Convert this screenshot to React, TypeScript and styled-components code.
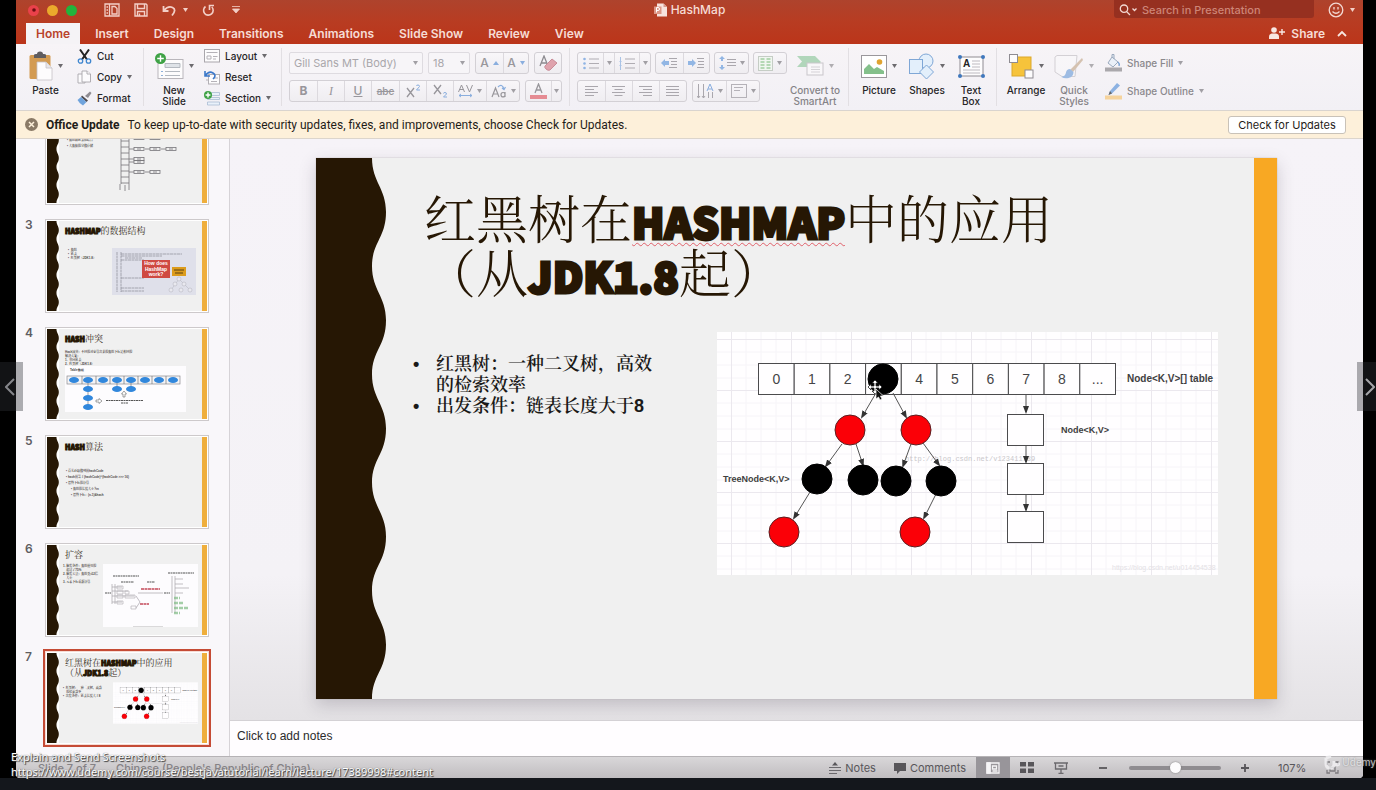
import React from 'react';
import styled, { createGlobalStyle, css } from 'styled-components';

const ui = '"Inter", "Roboto", "Liberation Sans", sans-serif';
const helv = '"Liberation Sans", "Noto Sans CJK SC", sans-serif';
const cjk = '"Liberation Sans", "Noto Serif CJK SC", "Noto Sans CJK SC", sans-serif';
const song = '"Noto Serif CJK SC", "Noto Sans CJK SC", serif';
const heavy = '"Impact", "Noto Sans CJK SC", sans-serif';

const Global = createGlobalStyle`
  *, *::before, *::after { box-sizing: border-box; }
  body { margin: 0; background: #14171c; font-family: ${ui}; }
  button, input, select { font: inherit; color: inherit; }
  button { border: 0; padding: 0; margin: 0; background: none; }
  svg { display: block; flex: none; }
`;

/* ---------- shell ---------- */

const Page = styled.div`
  position: relative;
  min-height: 100vh;
  display: flex;
  flex-direction: column;
  overflow: hidden;
  padding-bottom: 13px;
`;
const Stage = styled.div`
  flex: 1;
  display: flex;
  background: #000;
  padding: 0 13px 0 16px;
`;
const Window = styled.div`
  flex: 1;
  min-width: 0;
  display: flex;
  flex-direction: column;
  background: #f3f1f5;
  border-radius: 0 0 4px 4px;
  overflow: hidden;
`;
const Header = styled.header`
  background: linear-gradient(#ae432d, #b83c22 50%, #bb351a);
  color: #f6dcd5;
`;
const TitleBar = styled.div`
  height: 20px;
  display: grid;
  grid-template-columns: 1fr auto 1fr;
  align-items: center;
`;
const TitleLeft = styled.div`
  display: flex;
  align-items: center;
  padding-left: 12px;
`;
const Lights = styled.div`
  display: flex;
  gap: 8px;
  margin-right: 27px;
`;
const Light = styled.button<{ $c: string }>`
  width: 11px;
  height: 11px;
  border-radius: 50%;
  background: ${p => p.$c};
  display: grid;
  place-items: center;
`;
const QuickTools = styled.div`
  display: flex;
  align-items: center;
  gap: 14px;
`;
const Bare = styled.button`
  display: inline-flex;
  align-items: center;
  gap: 6px;
`;
const DocTitle = styled.h1`
  margin: 0;
  display: flex;
  align-items: center;
  gap: 4px;
  font-size: 12px;
  line-height: 20px;
  font-weight: 500;
`;
const TitleRight = styled.div`
  display: flex;
  justify-content: flex-end;
  align-items: center;
  gap: 14px;
  padding-right: 8px;
`;
const SearchBox = styled.label`
  width: 200px;
  height: 18px;
  margin-bottom: 2px;
  display: flex;
  align-items: center;
  gap: 4px;
  padding: 2px 5px 0;
  background: #963020;
  border-radius: 0 0 3px 3px;
`;
const SearchInput = styled.input`
  flex: 1;
  min-width: 0;
  border: 0;
  padding: 0;
  background: none;
  outline: none;
  font-size: 11px;
  line-height: 14px;
  font-weight: 500;
  &::placeholder { color: #cd8577; opacity: 1; }
`;
const TabRow = styled.nav`
  height: 24px;
  display: flex;
  align-items: flex-end;
  gap: 5px;
  padding: 0 16px 0 10px;
`;
const Tab = styled.button<{ $on?: boolean }>`
  height: 21px;
  padding: 0 10px;
  font-size: 12px;
  line-height: 21px;
  font-weight: 600;
  ${p => p.$on && css`background: #f5f3f6; color: #b9432b;`}
`;
const Spacer = styled.div`flex: 1;`;
const ShareGroup = styled.div`
  height: 22px;
  display: flex;
  align-items: center;
  gap: 12px;
  font-size: 12px;
  font-weight: 600;
`;

/* ---------- ribbon ---------- */

const Ribbon = styled.div`
  height: 67px;
  display: flex;
  background: linear-gradient(#f7f4f7, #f2f0f5);
  border-bottom: 1px solid #d9d4cf;
  padding: 4px 0;
  color: #262527;
`;
const Group = styled.div<{ $w?: number; $pad?: number; $gap?: number }>`
  flex: none;
  width: ${p => (p.$w ? p.$w + 'px' : 'auto')};
  padding-left: ${p => p.$pad ?? 8}px;
  gap: ${p => p.$gap ?? 0}px;
  display: flex;
  align-items: flex-start;
  border-right: 1px solid #e2dfe3;
  &:last-child { border-right: 0; }
`;
const Big = styled.button<{ $w: number; $dim?: boolean }>`
  width: ${p => p.$w}px;
  display: flex;
  flex-direction: column;
  align-items: center;
  gap: 4px;
  font-size: 10px;
  line-height: 11px;
  font-weight: 500;
  color: ${p => (p.$dim ? '#858387' : '#262527')};
  padding-top: 3px;
`;
const BigIcon = styled.span<{ $dim?: boolean }>`
  height: 30px;
  display: flex;
  align-items: center;
  gap: 5px;
  opacity: ${p => (p.$dim ? 0.5 : 1)};
`;
const SmallStack = styled.div<{ $gap?: number; $top?: number; $left?: number }>`
  display: flex;
  flex-direction: column;
  gap: ${p => p.$gap ?? 5}px;
  padding: ${p => p.$top ?? 0}px 0 0 ${p => p.$left ?? 0}px;
`;
const Small = styled.button<{ $dim?: boolean }>`
  height: 16px;
  display: flex;
  align-items: center;
  gap: 5px;
  font-size: 10px;
  line-height: 16px;
  font-weight: 500;
  white-space: nowrap;
  color: ${p => (p.$dim ? '#8a888c' : '#262527')};
`;
const Rows = styled.div`
  display: flex;
  flex-direction: column;
  gap: 6px;
  padding-top: 4px;
`;
const Line = styled.div<{ $gap?: number }>`
  display: flex;
  gap: ${p => p.$gap ?? 5}px;
`;
const Seg = styled.div`
  height: 22px;
  display: flex;
  border: 1px solid #d3d0d5;
  border-radius: 3px;
  background: linear-gradient(#f8f6f9, #efedf1);
`;
const Cell = styled.button<{ $w: number; $small?: boolean; $serif?: boolean }>`
  width: ${p => p.$w}px;
  display: flex;
  align-items: center;
  justify-content: center;
  gap: 4px;
  font-family: ${p => (p.$serif ? '"Liberation Serif", serif' : ui)};
  font-size: ${p => (p.$small ? 10 : 12)}px;
  line-height: 20px;
  font-weight: 500;
  color: #98969b;
  & + & { border-left: 1px solid #dcd9de; }
`;
const SelectWrap = styled.label<{ $w: number }>`
  width: ${p => p.$w}px;
  height: 22px;
  display: flex;
  align-items: center;
  padding: 0 4px;
  border: 1px solid #dedbe0;
  border-radius: 2px;
  background: #f7f5f8;
  color: #a9a7ab;
`;
const Select = styled.select`
  flex: 1;
  min-width: 0;
  appearance: none;
  border: 0;
  padding: 0;
  background: none;
  outline: none;
  font-size: 11px;
  line-height: 18px;
`;

/* ---------- update bar ---------- */

const UpdateBar = styled.div`
  height: 28px;
  display: flex;
  align-items: center;
  gap: 8px;
  padding: 0 17px 0 9px;
  background: #fdf0da;
  border-bottom: 1px solid #dcd5cc;
  font-family: "Roboto", sans-serif;
  font-size: 12px;
  color: #1f1c18;
`;
const UpdateText = styled.span`flex: 1;`;
const CheckButton = styled.button`
  width: 118px;
  height: 18px;
  border: 1px solid #c9c2b8;
  border-radius: 3px;
  background: #fff;
  font-family: ${ui};
  font-size: 11px;
  line-height: 16px;
  white-space: nowrap;
`;

/* ---------- workspace ---------- */

const Work = styled.main`
  flex: 1;
  min-height: 0;
  display: flex;
`;
const Sidebar = styled.aside`
  flex: none;
  width: 214px;
  height: 617px;
  min-height: 100%;
  overflow: hidden;
  display: flex;
  flex-direction: column;
  justify-content: flex-end;
  gap: 14px;
  padding: 0 0 11px 9px;
  background: #f9f7fa;
  border-right: 1px solid #d6d3d7;
`;
const ThumbRow = styled.div`
  flex: none;
  display: flex;
  align-items: flex-start;
`;
const ThumbNo = styled.span`
  width: 20px;
  font-size: 12px;
  line-height: 12px;
  font-weight: 600;
  color: #5f5d61;
`;
const Thumb = styled.button<{ $on?: boolean }>`
  width: 164px;
  height: 94px;
  display: flex;
  text-align: left;
  border: 1px solid #cdc9cb;
  padding: 1px;
  background: #fff;
  ${p => p.$on && css`border-color: #f6dcd5; outline: 2px solid #c54b35;`}
`;
const ThumbPaper = styled.span`
  flex: 1;
  min-width: 0;
  height: 100%;
  display: block;
  background: #f0f0f0;
  overflow: hidden;
`;
const ThumbTitle = styled.span`
  display: block;
  margin: 5px 0 0 6px;
  font-family: ${song};
  font-size: 9px;
  line-height: 10px;
  font-weight: 400;
  color: #3a3026;
  white-space: pre;
  b { font-family: ${heavy}; font-size: 7px; line-height: 7px; font-weight: 900; color: #261704; -webkit-text-stroke: 1px #261704; }
`;
const ThumbBody = styled.span<{ $top: number; $col: number; $left?: number; $stack?: boolean }>`
  display: grid;
  grid-template-columns: ${p => (p.$stack ? '1fr' : `${p.$col}px 1fr`)};
  margin: ${p => p.$top}px 0 0 ${p => p.$left ?? 6}px;
`;
const ThumbText = styled.span<{ $lh?: number; $top?: number }>`
  display: block;
  padding-top: ${p => p.$top ?? 0}px;
  font-family: ${cjk};
  font-size: 3px;
  line-height: ${p => p.$lh ?? 4}px;
  white-space: pre;
  font-weight: 700;
  color: #4e4a47;
`;
const ThumbStripe = styled.span`
  width: 5px;
  height: 100%;
  background: #efae3c;
`;
const Editor = styled.section`
  flex: 1;
  min-width: 0;
  display: flex;
  flex-direction: column;
`;
const Canvas = styled.div`
  flex: 1;
  display: flex;
  padding: 19px 86px 21px;
  background: linear-gradient(#f6f3f8, #f4f2f6 75%, #e4e2e5);
`;
const Slide = styled.article`
  flex: 1;
  min-width: 0;
  display: flex;
  background: #f0f0f0;
  box-shadow: 0 0 1px #aaa6a8, 0 6px 16px rgba(60, 50, 70, 0.22);
`;
const SlideContent = styled.div`
  flex: 1;
  min-width: 0;
  padding: 32px 36px 0 24px;
`;
const SlideTitle = styled.h2`
  margin: 0 0 0 13px;
  height: 112px;
  font-family: ${song};
  font-size: 52px;
  line-height: 54px;
  font-weight: 300;
  color: #261704;
  white-space: nowrap;
`;
const Heavy = styled.b`
  font-family: ${heavy};
  font-size: 42px;
  font-weight: 900;
  line-height: 36px;
  -webkit-text-stroke: 3px #261704;
`;
const Misspelt = styled(Heavy)`
  text-decoration: underline wavy #e0606a 1px;
  text-underline-offset: 3px;
  text-decoration-skip-ink: none;
`;
const SlideBody = styled.div`
  display: flex;
  justify-content: space-between;
  margin-top: 30px;
`;
const Bullets = styled.ul`
  margin: 22px 0 0;
  padding: 0 0 0 25px;
  width: 245px;
  font-family: ${cjk};
  font-size: 18px;
  line-height: 21px;
  font-weight: 600;
  color: #1a1918;
  list-style: none;
  li { position: relative; }
  li::before { content: '•'; position: absolute; left: -23px; }
`;
const SlideStripe = styled.div`
  width: 23px;
  background: #f8a823;
`;
const NotesPane = styled.div`
  height: 36px;
  padding: 0 7px;
  border-top: 1px solid #d4d1d5;
  background: #fffdff;
  font-family: ${helv};
  font-size: 12px;
  line-height: 31px;
  color: #2b2a2c;
`;

/* ---------- status bar ---------- */

const Status = styled.footer`
  height: 22px;
  display: flex;
  align-items: center;
  padding: 0 24px 0 22px;
  border-top: 1px solid #b6b3b6;
  background: linear-gradient(#d9d7d9, #c0bdc0);
  font-size: 11px;
  color: #58565a;
`;
const StatusText = styled.span`
  margin-right: 20px;
  font-weight: 500;
  color: #858286;
`;
const StatusButtons = styled.div`
  display: flex;
  gap: 18px;
  margin-right: 10px;
`;
const StatusButton = styled.button`
  display: flex;
  align-items: center;
  gap: 4px;
`;
const View = styled.button<{ $on?: boolean }>`
  width: 34px;
  height: 21px;
  display: grid;
  place-items: center;
  background: ${p => (p.$on ? '#98959a' : 'transparent')};
`;
const ZoomSlider = styled.input`
  width: 92px;
  height: 12px;
  margin: 0 20px 0 22px;
  appearance: none;
  background: none;
  &::-webkit-slider-runnable-track { height: 4px; border-radius: 2px; background: #8f8c90; }
  &::-webkit-slider-thumb {
    appearance: none;
    width: 11px;
    height: 11px;
    margin-top: -4px;
    border-radius: 50%;
    background: #fdfcfd;
    box-shadow: 0 0 2px #777;
  }
`;
const Percent = styled.span`
  width: 48px;
  margin-left: 29px;
`;

/* ---------- overlays on the player ---------- */

const PlayerArrow = styled.button<{ $side: 'left' | 'right' }>`
  position: absolute;
  top: 362px;
  ${p => p.$side}: 0;
  width: ${p => (p.$side === 'left' ? 23 : 19)}px;
  height: 49px;
  display: flex;
  align-items: center;
  justify-content: flex-start;
  padding-left: ${p => (p.$side === 'left' ? 5 : 8)}px;
  background: rgba(48, 50, 56, 0.38);
`;
const Caption = styled.div`
  position: absolute;
  left: 11px;
  bottom: 12px;
  font-family: "Noto Sans", "Open Sans", sans-serif;
  font-size: 11px;
  line-height: 15px;
  color: #fff;
  text-shadow: 1px 1px 1px #333, 0 0 1px #555;
`;
const CaptionLink = styled.a`
  display: block;
  color: inherit;
  text-decoration: none;
`;
const Watermark = styled.div`
  position: absolute;
  right: 0;
  bottom: 21px;
  display: flex;
  align-items: center;
  gap: 2px;
  font-size: 10px;
  line-height: 16px;
  color: rgba(250, 250, 252, 0.7);
  text-shadow: 0 0 2px #777;
`;

/* ---------- drawings ---------- */

const Caret = ({ c = '#6c6a6e' }: { c?: string }) => (
  <svg width="5" height="4" viewBox="0 0 5 4"><path d="M0 0h5L2.5 4z" fill={c} /></svg>
);

const wave = (() => {
  let d = 'M0 0H56';
  for (let i = 0; i < 5; i++) {
    const y = i * 108.2;
    d += `C56 ${y + 24} 70 ${y + 30} 70 ${y + 54}C70 ${y + 80} 56 ${y + 84} 56 ${y + 108.2}`;
  }
  return d + 'V541H0Z';
})();
const Wave = ({ small }: { small?: boolean }) => (
  <svg width={small ? 12 : 71} height={small ? 90 : 541} viewBox="0 0 71 541" preserveAspectRatio="none">
    <path d={wave} fill="#261704" />
  </svg>
);

const tableLabels = ['0', '1', '2', '', '4', '5', '6', '7', '8', '...'];
const edges: [number, number, number, number][] = [
  [159, 61, 145, 85], [176, 61, 189, 85],
  [125, 112, 109, 134], [139, 112, 146, 133],
  [194, 112, 186, 134], [206, 111, 222, 133],
  [93, 160, 77, 186], [219, 162, 207, 186],
  [309, 63, 309, 80], [309, 114, 309, 130], [309, 163, 309, 178],
];
const balls: [number, number, string][] = [
  [166, 47, '#000'], [133, 98, '#fb0007'], [199, 98, '#fb0007'],
  [100, 147, '#000'], [146, 148, '#000'], [179, 149, '#000'], [224, 149, '#000'],
  [67, 200, '#fb0007'], [198, 200, '#fb0007'],
];
const Diagram = ({ width, height, cursor }: { width: number; height: number; cursor?: boolean }) => {
  const id = cursor ? 'main' : 'mini';
  return (
    <svg width={width} height={height} viewBox="0 0 501 243" fontFamily="Liberation Sans, sans-serif">
      <defs>
        <pattern id={'g' + id} width="60" height="51" patternUnits="userSpaceOnUse" x="14" y="7">
          <path d="M15 0V51M30 0V51M45 0V51M0 13H60M0 26H60M0 39H60" stroke="#f6f4f8" fill="none" />
          <path d="M0.5 0V51M0 0.5H60" stroke="#ebe8ee" fill="none" />
        </pattern>
        <marker id={'a' + id} markerWidth="9" markerHeight="7" refX="6" refY="3" orient="auto" markerUnits="userSpaceOnUse">
          <path d="M0 0L8 3L0 6Z" fill="#333" />
        </marker>
      </defs>
      <rect width="501" height="243" fill="#fffeff" />
      <rect width="501" height="243" fill={`url(#g${id})`} />
      <text x="188" y="129" fontSize="7" fontFamily="Liberation Mono, monospace" fill="#c9c7cb">http://blog.csdn.net/v123411739</text>
      <text x="395" y="238" fontSize="7" fill="#e3e1e5">https://blog.csdn.net/u014454538</text>
      {tableLabels.map((t, i) => (
        <g key={i}>
          <rect x={41.5 + i * 35.7} y="31.5" width="35.7" height="31" fill="#fffeff" stroke="#4b4b4d" />
          <text x={59.3 + i * 35.7} y="52" fontSize="14" textAnchor="middle" fill="#454547">{t}</text>
        </g>
      ))}
      {[82, 131, 179].map(y => (
        <rect key={y} x="290.5" y={y + 0.5} width="36" height="31" fill="#fffeff" stroke="#4b4b4d" />
      ))}
      {edges.map(([a, b, c, d], i) => (
        <line key={i} x1={a} y1={b} x2={c} y2={d} stroke="#555" markerEnd={`url(#a${id})`} />
      ))}
      {balls.map(([x, y, c], i) => (
        <circle key={i} cx={x} cy={y} r="15" fill={c} stroke={c === '#000' ? '#000' : '#5b2022'} />
      ))}
      <g fontSize="9" fontWeight="700" fill="#3f3f41">
        <text x="410" y="50" fontSize="10">Node&lt;K,V&gt;[] table</text>
        <text x="344" y="101">Node&lt;K,V&gt;</text>
        <text x="6" y="150">TreeNode&lt;K,V&gt;</text>
      </g>
      {cursor && (
        <g>
          <path d="M158 48l3 3h-2v3h3v-2l3 3-3 3v-2h-3v3h2l-3 3-3-3h2v-3h-3v2l-3-3 3-3v2h3v-3h-2z" fill="#fff" stroke="#222" strokeWidth="0.8" />
          <path d="M159 57v10l2.500-2 1.500 3 2-1-1.500-3h3z" fill="#111" stroke="#fff" strokeWidth="0.7" />
        </g>
      )}
    </svg>
  );
};

const ArrayPic = () => (
  <svg width="62" height="80" viewBox="0 0 62 80" fill="none" stroke="#77757a" strokeWidth="0.8">
    <path d="M3 0V71M11 0V71M3 4H11M3 10H11M3 16H11M3 22H11M3 28H11M3 34H11M3 40H11M3 46H11M3 52H11M3 58H11M3 64H11M3 70H11M2 71V77M7 72V78M11 71V77" />
    {[[25, 2], [36, 3], [46, 1], [49, 1], [59, 2]].map(([y, n]) =>
      Array.from({ length: n }, (_, i) => (
        <g key={`${y}-${i}`}>
          <path d={`M${11 + i * 16} ${y}h5`} />
          <rect x={16 + i * 16} y={y - 1.500} width="10" height="3" />
          <path d={`M${19 + i * 16} ${y}h4`} />
        </g>
      )),
    )}
  </svg>
);
const HowPic = () => (
  <svg width="84" height="47" viewBox="0 0 84 47">
    <rect width="84" height="47" fill="#dfe0ea" />
    <g stroke="#8b8b96" strokeWidth="0.7" fill="none">
      <path d="M5 4V44M9 4V44M9 6H70M9 8H50M9 12H32M9 30H32M9 40H32M9 43H32M13 10H30" strokeDasharray="3 0.5" />
    </g>
    <rect x="30" y="12" width="28" height="18" fill="#cf4a42" />
    <g fontFamily="Liberation Sans, sans-serif" fontSize="5" fontWeight="700" fill="#fff" textAnchor="middle">
      <text x="44" y="17">How does</text>
      <text x="44" y="23">HashMap</text>
      <text x="44" y="28">work?</text>
    </g>
    <rect x="60" y="19" width="14" height="9" fill="#dc9c1c" />
    <path d="M62 22h10M63 25h8" stroke="#5c4312" />
    <g fill="#e9e9ef" stroke="#b9b9c2" strokeWidth="0.6">
      <path d="M67 31L59 42M67 31L78 42" />
      <circle cx="67" cy="31" r="2" /><circle cx="63" cy="36" r="2" /><circle cx="72" cy="36" r="2" />
      <circle cx="59" cy="42" r="2" /><circle cx="69" cy="42" r="2" /><circle cx="78" cy="42" r="2" />
    </g>
  </svg>
);
const BucketPic = () => (
  <svg width="121" height="46" viewBox="0 0 121 46">
    <rect width="121" height="46" fill="#fdfcfe" />
    <text x="5" y="5" fontSize="3" fontFamily="Liberation Sans, sans-serif" fontWeight="700" fill="#444">Table数组</text>
    <rect x="2" y="10" width="113" height="8" fill="#f4f4f6" stroke="#8b8b8f" strokeWidth="0.7" />
    <path d="M17 10v8M31 10v8M45 10v8M59 10v8M73 10v8M87 10v8M101 10v8M23 14V40M52 14V23M66 14V23" stroke="#77777a" strokeWidth="0.7" />
    {[9, 23, 38, 52, 66, 80, 94, 108].map(x => <ellipse key={x} cx={x} cy="14" rx="5" ry="3" fill="#3187dc" />)}
    {[[23, 23], [23, 32], [23, 41], [52, 23], [66, 23]].map(([x, y]) => (
      <ellipse key={`${x}${y}`} cx={x} cy={y} rx="5" ry="3" fill="#3187dc" />
    ))}
    <path d="M31 34h3v-1.500l3 2.500-3 2.500V36h-3zM58 31v-3h-1.500l2.500-3 2.500 3H60v3z" fill="#fff" stroke="#666" strokeWidth="0.6" />
    <path d="M41 34.500H78M56 37H63" stroke="#555" strokeWidth="1.200" strokeDasharray="2 0.500" />
  </svg>
);
const ResizePic = () => (
  <svg width="95" height="63" viewBox="0 0 95 63" fill="none" strokeWidth="0.7">
    <rect width="95" height="63" fill="#fdfcfe" />
    <path d="M10 12H36M18 18H31M44 18H52M65 9H91M2 29H8M61 29H67" stroke="#555" strokeWidth="1.200" strokeDasharray="2 0.500" />
    <path d="M9 20V40M12 20V40M9 23H19M9 27H25M9 32H31M9 38H19M69 12V49M72 12V49M72 15H80M72 20H80M72 24H86M72 29H80M35 29H60M33 32L37 38L33 44" stroke="#a7a4aa" />
    <path d="M14 22h6v3h-6zM14 27h6v3h-6zM22 27h4v3h-4zM14 31h6v3h-6zM22 31h10v3h-10zM14 37h6v3h-6zM28 42h5v3h-5z" stroke="#b5b2b8" />
    <path d="M38 25H57M37 40H46" stroke="#c4495a" strokeWidth="1.500" strokeDasharray="3 0.500" />
    <path d="M71 34H77M71 39H80M71 44H86M71 49H77" stroke="#7dbb83" strokeWidth="2.500" strokeDasharray="4 1" opacity="0.7" />
    <path d="M30 63H60" stroke="#999" />
  </svg>
);

const AlignIcon = ({ ws, align = 'l' }: { ws: number[]; align?: string }) => (
  <svg width="14" height="12" viewBox="0 0 14 12" stroke="#aaa7ad">
    {ws.map((w, i) => {
      const s = align === 'l' ? 0 : align === 'r' ? 13 - w : (13 - w) / 2;
      return <path key={i} d={`M${s} ${i * 3 + 1.5}h${w}`} />;
    })}
  </svg>
);
const ListIcon = ({ num }: { num?: boolean }) => (
  <svg width="16" height="13" viewBox="0 0 16 13">
    {num
      ? <path d="M1.500 0v13M0.500 4.500h2M0.500 8.500h2" stroke="#a9c3e6" />
      : [2, 6.5, 11].map(y => <circle key={y} cx="1.500" cy={y} r="1.300" fill="#8fb4e4" />)}
    <path d="M6 2h10M6 6.500h10M6 11h10" stroke="#b0adb3" />
  </svg>
);
const OutdentIcon = () => (
  <svg width="17" height="12" viewBox="0 0 17 12">
    <path d="M0 6l4-4v2h4v4H4v2z" fill="#92b6e4" />
    <path d="M8 1.500h8M10 4.500h6M10 7.500h6M8 10.500h8" stroke="#aaa7ad" />
  </svg>
);
const IndentIcon = () => (
  <svg width="17" height="12" viewBox="0 0 17 12">
    <path d="M8 6L4 2v2H0v4h4v2z" fill="#92b6e4" />
    <path d="M9 1.500h7M10 4.500h6M10 7.500h6M9 10.500h7" stroke="#aaa7ad" />
  </svg>
);

const PasteIcon = () => (
  <svg width="24" height="30" viewBox="0 0 24 30">
    <rect x="0.500" y="4" width="21" height="24" rx="1.500" fill="#d39b52" />
    <path d="M5 7V4q0-1 2-1h1q0-2.500 3-2.500T14 3h1q2 0 2 1v3z" fill="#5f5c5e" />
    <path d="M8 11h9l6 6v12H8z" fill="#fdfcfd" stroke="#c5c2c6" strokeWidth="0.8" />
    <path d="M17 11v6h6" fill="#e8e6ea" stroke="#c5c2c6" strokeWidth="0.8" />
  </svg>
);
const CutIcon = () => (
  <svg width="15" height="15" viewBox="0 0 15 15" fill="none">
    <path d="M3 0.500L10 10.500M12 0.500L5 10.500" stroke="#222" strokeWidth="2" />
    <circle cx="3.500" cy="12" r="2.200" stroke="#3f86cf" strokeWidth="1.300" />
    <circle cx="11.500" cy="12" r="2.200" stroke="#3f86cf" strokeWidth="1.300" />
  </svg>
);
const CopyIcon = () => (
  <svg width="15" height="15" viewBox="0 0 15 15" fill="#fcfbfd" stroke="#a9a6ab" strokeWidth="0.9">
    <path d="M1 4h5l2 2v7H1z" /><path d="M5 1h5l3.500 3v8H5z" /><path d="M10 1v3h3.500" />
  </svg>
);
const FormatIcon = () => (
  <svg width="15" height="15" viewBox="0 0 15 15">
    <path d="M8 5l5-4.500 1.500 1.500L11 7z" fill="#8f8c92" />
    <path d="M5 4.500L11 9.500 9.500 11 4 6z" fill="#4e4b50" />
    <path d="M4 6l5.500 5L6 14.500Q2 12 0.500 9z" fill="#6fa3dc" />
  </svg>
);
const Plus = ({ x = 5, y = 5, r = 5 }: { x?: number; y?: number; r?: number }) => (
  <g>
    <circle cx={x} cy={y} r={r} fill="#3fa246" />
    <path d={`M${x - r * 0.6} ${y}h${r * 1.2}M${x} ${y - r * 0.6}v${r * 1.2}`} stroke="#fff" strokeWidth="1.400" />
  </g>
);
const NewSlideIcon = () => (
  <svg width="29" height="27" viewBox="0 0 29 27">
    <rect x="3" y="6.500" width="25" height="19" fill="#fdfcfd" stroke="#b9b6bb" />
    <path d="M10 10.500h15v4H10zM10 18.500h15M10 22.500h15" stroke="#b4b9c0" fill="#dfe3e8" />
    <path d="M6 18.500h2M6 22.500h2" stroke="#8fb1da" />
    <Plus x={5.500} y={5.500} r={5.500} />
  </svg>
);
const LayoutIcon = () => (
  <svg width="16" height="14" viewBox="0 0 16 14" fill="#fdfcfd" stroke="#a9a6ab">
    <rect x="0.500" y="0.500" width="15" height="12.500" /><path d="M2.500 3.500h11M3 7h4v3H3zM9 7.500h4.500M9 10h3" stroke="#b5b2b8" />
  </svg>
);
const ResetIcon = () => (
  <svg width="16" height="15" viewBox="0 0 16 15" fill="none">
    <rect x="4.500" y="4.500" width="11" height="9.500" fill="#fdfcfd" stroke="#b3b0b5" />
    <path d="M7 11.500h6M2 10h2M10 8h4" stroke="#b5b2b8" />
    <path d="M1 1v5h5M1.500 5.500Q5 0.500 9 3t0 6" stroke="#3b78c9" strokeWidth="1.600" />
  </svg>
);
const SectionIcon = () => (
  <svg width="16" height="15" viewBox="0 0 16 15">
    <path d="M7.500 1.500h8v3h-8zM3.500 6.500h12v2h-12zM3.500 11h12v3h-12z" fill="#e9f1fa" stroke="#a9bdd3" strokeWidth="0.8" />
    <Plus x={4} y={4} r={4} />
  </svg>
);
const SmartIcon = () => (
  <svg width="27" height="22" viewBox="0 0 27 22">
    <path d="M0 1h18l6 6-6 5H0l5-5.500z" fill="#6fbb80" />
    <rect x="10" y="8" width="16" height="12" fill="#fdfcfd" stroke="#9f9ca1" />
    <path d="M14 12h9M14 14.500h9M14 17h9" stroke="#a5a2a7" strokeWidth="0.8" />
  </svg>
);
const PictureIcon = () => (
  <svg width="26" height="23" viewBox="0 0 26 23">
    <rect x="0.500" y="0.500" width="25" height="22" fill="#fff" stroke="#9a979c" />
    <path d="M3 19v-5l5-5 5 5 3-2 7 4v3z" fill="#84c08b" /><circle cx="18.500" cy="7" r="2.800" fill="#e0a330" />
  </svg>
);
const ShapesIcon = () => (
  <svg width="26" height="27" viewBox="0 0 26 27" fill="#e3effb" stroke="#7fa7d6">
    <circle cx="17" cy="8" r="7" /><rect x="0.500" y="6.500" width="13" height="14" /><path d="M17.500 12l7 7-7 7-7-7z" />
  </svg>
);
const TextBoxIcon = () => (
  <svg width="27" height="23" viewBox="0 0 27 23">
    <rect x="2" y="2" width="23" height="19" fill="#fdfcfd" stroke="#8f8c92" />
    <text x="5" y="12" fontSize="10" fontWeight="700" fontFamily="Liberation Sans, sans-serif" fill="#222">A</text>
    <path d="M14 6h8M14 9h8M14 12h8M5 15h17M5 18h17" stroke="#bdbac0" />
    {[[2, 2], [25, 2], [2, 21], [25, 21]].map(([x, y]) => <circle key={`${x}-${y}`} cx={x} cy={y} r="2" fill="#3f78bd" />)}
  </svg>
);
const ArrangeIcon = () => (
  <svg width="25" height="25" viewBox="0 0 25 25">
    <rect x="3" y="3" width="19" height="19" fill="#f6c33b" stroke="#dca82b" />
    <rect x="0.500" y="0.500" width="8" height="8" fill="#fdfcfd" stroke="#8f8c92" />
    <rect x="16" y="16" width="8" height="8" fill="#fdfcfd" stroke="#8f8c92" />
  </svg>
);
const QuickIcon = () => (
  <svg width="30" height="27" viewBox="0 0 30 27">
    <path d="M3 2.500h20l-2 21H8L1 19V4z" fill="#faf9fb" stroke="#b2afb4" />
    <path d="M28 5l1 2-10 12-3-2z" fill="#b5926c" /><path d="M16 16l3.500 3q0 5-5 6-4 1-7-1 4-1 4.500-4.500T16 16z" fill="#4987d1" />
  </svg>
);
const FillIcon = () => (
  <svg width="17" height="18" viewBox="0 0 17 18" fill="none">
    <path d="M7 3l6 5-5 5-5-4zM7 3V0.500h2V5" stroke="#9aa9bd" fill="#eaf0f8" /><path d="M13 8q2 2 1 4" stroke="#7fa7d6" strokeWidth="1.500" />
    <rect y="13.500" width="17" height="4" fill="#aaa8ac" />
  </svg>
);
const OutlineIcon = () => (
  <svg width="17" height="18" viewBox="0 0 17 18">
    <path d="M12 1l3 2.500-8 8L3.500 13 5 9z" fill="#8db2e2" /><path d="M5 9l2 2.500L3.500 13z" fill="#666" />
    <rect y="13.500" width="17" height="4" fill="#f6d39c" />
  </svg>
);

const c = '#a19fa4';

export default function App() {
  return (
    <Page>
      <Global />
      <Stage>
        <Window>
          <Header>
            <TitleBar>
              <TitleLeft>
                <Lights>
                  <Light $c="#e9414a" aria-label="Close">
                    <svg width="4" height="4"><circle cx="2" cy="2" r="1.800" fill="#6d0d12" /></svg>
                  </Light>
                  <Light $c="#eba92c" aria-label="Minimize" />
                  <Light $c="#22b33c" aria-label="Zoom" />
                </Lights>
                <QuickTools>
                  <Bare aria-label="Templates">
                    <svg width="16" height="14" viewBox="0 0 16 14" fill="none" stroke="#f3cfc7" strokeWidth="1.300">
                      <path d="M1 1h14v12H1zM5.500 1v12M2.500 4h1.500M2.500 7h1.500M2.500 10h1.500M8 3.500h3l2 2V11H8z" />
                    </svg>
                  </Bare>
                  <Bare aria-label="Save">
                    <svg width="14" height="14" viewBox="0 0 14 14" fill="none" stroke="#f3cfc7" strokeWidth="1.400">
                      <path d="M1 1h11l1 1v11H1zM3.500 1v4.500h7V1M3.500 13V8.500h7V13M5.500 13v-2.500" />
                    </svg>
                  </Bare>
                  <Bare aria-label="Undo">
                    <svg width="15" height="13" viewBox="0 0 15 13" fill="none" stroke="#f3cfc7" strokeWidth="1.800">
                      <path d="M1.500 2v5h5M2 6.500Q6 1.500 10.500 3.500T10 11.500" />
                    </svg>
                    <Caret c="#f3cfc7" />
                  </Bare>
                  <Bare aria-label="Redo">
                    <svg width="13" height="13" viewBox="0 0 13 13" fill="none" stroke="#f3cfc7" strokeWidth="1.600">
                      <path d="M3.500 2.500A4.800 4.800 0 1 0 9.800 3M7.500 6V1.500H12" />
                    </svg>
                  </Bare>
                  <Bare aria-label="Customize toolbar">
                    <svg width="11" height="8" viewBox="6 0 11 8"><path d="M9 0.500h8M9.500 3h7L13 7z" fill="#f3cfc7" stroke="#f3cfc7" strokeWidth="0.8" /></svg>
                  </Bare>
                </QuickTools>
              </TitleLeft>
              <DocTitle>
                <svg width="13" height="14" viewBox="0 0 13 14">
                  <path d="M3 0.500h6.500L13 4v9.500H3z" fill="#f7e3de" /><path d="M9.500 0.500V4H13" fill="#d79a8d" />
                  <rect y="3.500" width="7.500" height="7.500" fill="#dd9787" /><path d="M2.500 9.500v-5h1.500q1.500 0 1.500 1.500T4 7.500H2.500" fill="none" stroke="#fff" />
                </svg>
                HashMap
              </DocTitle>
              <TitleRight>
                <SearchBox>
                  <svg width="19" height="12" viewBox="0 0 19 12" fill="none" stroke="#f3d9d3" strokeWidth="1.300">
                    <circle cx="5" cy="4.700" r="3.700" /><path d="M7.500 7.500L11 11M13.500 4.500l2 2 2-2" />
                  </svg>
                  <SearchInput placeholder="Search in Presentation" aria-label="Search in Presentation" />
                </SearchBox>
                <Bare aria-label="Feedback">
                  <svg width="16" height="16" viewBox="0 0 16 16" fill="none" stroke="#f3d9d3" strokeWidth="1.300">
                    <circle cx="8" cy="8" r="6.800" /><path d="M4.500 9.500q3.500 3.500 7 0M6 5v2.500M10 5v2.500" />
                  </svg>
                  <Caret c="#f3cfc7" />
                </Bare>
              </TitleRight>
            </TitleBar>
            <TabRow>
              <Tab $on>Home</Tab>
              {['Insert', 'Design', 'Transitions', 'Animations', 'Slide Show', 'Review', 'View'].map(t => <Tab key={t}>{t}</Tab>)}
              <Spacer />
              <ShareGroup>
                <Bare>
                  <svg width="16" height="12" viewBox="0 0 16 12" fill="#f8e6e1">
                    <circle cx="5" cy="3" r="2.800" /><path d="M0 12V9.500Q0 7 3 6.500h4q3 .5 3 3V12z" /><path d="M13 2v6M10 5h6" stroke="#f8e6e1" strokeWidth="1.400" />
                  </svg>
                  Share
                </Bare>
                <Bare aria-label="Collapse ribbon">
                  <svg width="10" height="7" viewBox="0 0 10 7" fill="none" stroke="#f8e6e1" strokeWidth="1.800"><path d="M1 6l4-4 4 4" /></svg>
                </Bare>
              </ShareGroup>
            </TabRow>
          </Header>

          <Ribbon>
            <Group $w={128} $pad={8} $gap={10}>
              <Big $w={43}><BigIcon><PasteIcon /><Caret /></BigIcon>Paste</Big>
              <SmallStack>
                <Small><CutIcon />Cut</Small>
                <Small><CopyIcon />Copy <Caret /></Small>
                <Small><FormatIcon />Format</Small>
              </SmallStack>
            </Group>
            <Group $w={138} $pad={9} $gap={9}>
              <Big $w={42}><BigIcon><NewSlideIcon /><Caret /></BigIcon><span>New<br />Slide</span></Big>
              <SmallStack>
                <Small><LayoutIcon />Layout <Caret /></Small>
                <Small><ResetIcon />Reset</Small>
                <Small><SectionIcon />Section <Caret /></Small>
              </SmallStack>
            </Group>
            <Group $w={288} $pad={7}>
              <Rows>
                <Line>
                  <SelectWrap $w={134}>
                    <Select aria-label="Font"><option>Gill Sans MT (Body)</option></Select><Caret c={c} />
                  </SelectWrap>
                  <SelectWrap $w={42}>
                    <Select aria-label="Font size"><option>18</option></Select><Caret c={c} />
                  </SelectWrap>
                  <Seg>
                    <Cell $w={27} aria-label="Grow font"><span>A</span><svg width="6" height="4"><path d="M0 4L3 0 6 4z" fill="#8aaede" /></svg></Cell>
                    <Cell $w={25} aria-label="Shrink font"><span>A</span><Caret c="#8aaede" /></Cell>
                  </Seg>
                  <Seg>
                    <Cell $w={26} aria-label="Clear formatting">
                      <svg width="19" height="17" viewBox="0 0 19 17"><path d="M1 11L5 1l4 10M2.500 8h5" stroke="#8d8b90" fill="none" strokeWidth="1.300" /><path d="M6 11l7-7 5 4-7 7q-2 1-4-1t-1-3z" fill="#dfa3ad" stroke="#c98c98" /></svg>
                    </Cell>
                  </Seg>
                </Line>
                <Line>
                  <Seg>
                    <Cell $w={27}><b>B</b></Cell>
                    <Cell $w={27} $serif><i>I</i></Cell>
                    <Cell $w={27}><u>U</u></Cell>
                    <Cell $w={28} $small><s>abc</s></Cell>
                    <Cell $w={27} aria-label="Superscript"><svg width="15" height="14" viewBox="0 0 15 14" fill="none" stroke="#98969b" strokeWidth="1.300"><path d="M1 4l7 9M8 4l-7 9" /><path d="M10.500 2q0-1 1.500-1t1.500 1.500L10.500 6H14" stroke="#8aaede" strokeWidth="1" /></svg></Cell>
                    <Cell $w={27} aria-label="Subscript"><svg width="15" height="14" viewBox="0 0 15 14" fill="none" stroke="#98969b" strokeWidth="1.300"><path d="M1 1l7 9M8 1l-7 9" /><path d="M10.500 9.500q0-1 1.500-1t1.500 1.500l-3 3H14" stroke="#8aaede" strokeWidth="1" /></svg></Cell>
                    <Cell $w={33} aria-label="Character spacing"><svg width="15" height="14" viewBox="0 0 15 14" fill="none" stroke="#98969b"><path d="M0.500 8L3.500 1l3 7M1.500 5.500h4M8.500 1l3 7 3-7" /><path d="M1 11.500h13M3 10l-2 1.500L3 13M12 10l2 1.500-2 1.500" stroke="#8aaede" /></svg><Caret c={c} /></Cell>
                    <Cell $w={33} aria-label="Change case"><svg width="16" height="14" viewBox="0 0 16 14" fill="none" stroke="#98969b" strokeWidth="1.200"><path d="M1 13L4.500 4 8 13M2 10h5M14 8v5M14 10.500q0-2-2-2t-2 2.200 2 2.200 2-2" /><path d="M7 3q4-4 6 2M11 4l2 1.500L14.500 3" stroke="#8aaede" /></svg><Caret c={c} /></Cell>
                  </Seg>
                  <Seg>
                    <Cell $w={25} aria-label="Font color"><svg width="17" height="17" viewBox="0 0 17 17"><path d="M5 10L8.500 1 12 10M6 7h5" stroke="#98969b" fill="none" strokeWidth="1.300" /><rect y="12" width="17" height="4" fill="#e58b93" /></svg></Cell>
                    <Cell $w={10} aria-label="Font color options"><Caret c={c} /></Cell>
                  </Seg>
                </Line>
              </Rows>
            </Group>
            <Group $w={279} $pad={7}>
              <Rows>
                <Line $gap={4}>
                  <Seg>
                    <Cell $w={25} aria-label="Bullets"><ListIcon /></Cell>
                    <Cell $w={11} aria-label="Bullet styles"><Caret c={c} /></Cell>
                    <Cell $w={25} aria-label="Numbering"><ListIcon num /></Cell>
                    <Cell $w={11} aria-label="Number styles"><Caret c={c} /></Cell>
                  </Seg>
                  <Seg>
                    <Cell $w={27} aria-label="Decrease indent"><OutdentIcon /></Cell>
                    <Cell $w={26} aria-label="Increase indent"><IndentIcon /></Cell>
                  </Seg>
                  <Seg>
                    <Cell $w={33} aria-label="Line spacing">
                      <svg width="17" height="14" viewBox="0 0 17 14"><path d="M3 0l3 3H4v2H2V3H0zM3 14l3-3H4V9H2v2H0z" fill="#92b6e4" /><path d="M8 3.500h9M8 6.500h9M8 9.500h9" stroke="#aaa7ad" /></svg><Caret c={c} />
                    </Cell>
                  </Seg>
                  <Seg>
                    <Cell $w={32} aria-label="Columns">
                      <svg width="15" height="15" viewBox="0 0 15 15"><rect x="0.500" y="0.500" width="14" height="14" fill="#f1f6f1" stroke="#c5cdc5" /><path d="M4.500 2v11M10.500 2v11" stroke="#b5d8b5" strokeWidth="4" strokeDasharray="2 1" /></svg><Caret c={c} />
                    </Cell>
                  </Seg>
                </Line>
                <Line>
                  <Seg>
                    <Cell $w={27} aria-label="Align left"><AlignIcon ws={[13, 9, 13, 9]} /></Cell>
                    <Cell $w={27} aria-label="Center"><AlignIcon ws={[13, 8, 13, 8]} align="c" /></Cell>
                    <Cell $w={27} aria-label="Align right"><AlignIcon ws={[13, 9, 13, 9]} align="r" /></Cell>
                    <Cell $w={27} aria-label="Justify"><AlignIcon ws={[13, 13, 13, 13]} /></Cell>
                  </Seg>
                  <Seg>
                    <Cell $w={33} aria-label="Text direction"><svg width="17" height="15" viewBox="0 0 17 15" fill="none"><path d="M1.500 0v14M6.500 0v14M11.500 8v6M15.500 8v6M0 12l1.500 2L3 12M5 12l1.500 2L8 12" stroke="#aaa7ad" /><path d="M10 7l3-7 3 7M11 5h4" stroke="#8aaede" /></svg><Caret c={c} /></Cell>
                    <Cell $w={33} aria-label="Align text"><svg width="16" height="15" viewBox="0 0 16 15" fill="none" stroke="#b5b2b8"><rect x="0.500" y="0.500" width="15" height="13" /><path d="M3 3.500h9M3 6.500h6" /></svg><Caret c={c} /></Cell>
                  </Seg>
                </Line>
              </Rows>
              <Big $w={56} $dim><BigIcon $dim><SmartIcon /><Caret /></BigIcon><span>Convert to SmartArt</span></Big>
            </Group>
            <Group $w={148} $pad={6} $gap={0}>
              <Big $w={48}><BigIcon><PictureIcon /><Caret /></BigIcon>Picture</Big>
              <Big $w={48}><BigIcon><ShapesIcon /><Caret /></BigIcon>Shapes</Big>
              <Big $w={40}><BigIcon><TextBoxIcon /></BigIcon><span>Text<br />Box</span></Big>
            </Group>
            <Group $pad={5}>
              <Big $w={48}><BigIcon><ArrangeIcon /><Caret /></BigIcon>Arrange</Big>
              <Big $w={48} $dim><BigIcon $dim><QuickIcon /><Caret /></BigIcon><span>Quick<br />Styles</span></Big>
              <SmallStack $gap={12} $top={7} $left={7}>
                <Small $dim><FillIcon />Shape Fill <Caret c={c} /></Small>
                <Small $dim><OutlineIcon />Shape Outline <Caret c={c} /></Small>
              </SmallStack>
            </Group>
          </Ribbon>

          <UpdateBar>
            <Bare aria-label="Dismiss">
              <svg width="13" height="13" viewBox="0 0 13 13"><circle cx="6.500" cy="6.500" r="6.500" fill="#8a7a66" /><path d="M4 4l5 5M9 4l-5 5" stroke="#fdf0da" strokeWidth="1.500" /></svg>
            </Bare>
            <b>Office Update</b>
            <UpdateText>To keep up-to-date with security updates, fixes, and improvements, choose Check for Updates.</UpdateText>
            <CheckButton>Check for Updates</CheckButton>
          </UpdateBar>

          <Work>
            <Sidebar>
              <ThumbRow>
                <ThumbNo />
                <Thumb aria-label="Slide 2"><Wave small />
                  <ThumbPaper>
                    <ThumbBody $top={0} $col={51} $left={8}>
                      <ThumbText $lh={6} $top={24}>{'• 数组和链表的结合\n• 大数据的分散存储'}</ThumbText>
                      <ArrayPic />
                    </ThumbBody>
                  </ThumbPaper><ThumbStripe /></Thumb>
              </ThumbRow>
              <ThumbRow>
                <ThumbNo>3</ThumbNo>
                <Thumb><Wave small />
                  <ThumbPaper>
                    <ThumbTitle><b>HASHMAP</b>的数据结构</ThumbTitle>
                    <ThumbBody $top={12} $col={44} $left={9}>
                      <ThumbText>{'•  数组\n•  链表\n•  红黑树（JDK1.8）'}</ThumbText>
                      <HowPic />
                    </ThumbBody>
                  </ThumbPaper><ThumbStripe /></Thumb>
              </ThumbRow>
              <ThumbRow>
                <ThumbNo>4</ThumbNo>
                <Thumb><Wave small />
                  <ThumbPaper>
                    <ThumbTitle><b>HASH</b>冲突</ThumbTitle>
                    <ThumbBody $top={6} $col={0} $stack>
                      <ThumbText>{'Hash冲突：不同的对象算出来的数组下标是相同的\n解决方案：\n1.  单向链表\n2.  红黑树（JDK1.8）'}</ThumbText>
                      <BucketPic />
                    </ThumbBody>
                  </ThumbPaper><ThumbStripe /></Thumb>
              </ThumbRow>
              <ThumbRow>
                <ThumbNo>5</ThumbNo>
                <Thumb><Wave small />
                  <ThumbPaper>
                    <ThumbTitle><b>HASH</b>算法</ThumbTitle>
                    <ThumbBody $top={16} $col={100} $left={7}>
                      <ThumbText $lh={6}>{'• 首先获取散列值hashCode\n• hash值等于(hashCode)^(hashCode >>> 16)\n• 最终下标的计算\n      • 数组的长度大小为n\n      • 最终下标：(n-1)&hash'}</ThumbText>
                    </ThumbBody>
                  </ThumbPaper><ThumbStripe /></Thumb>
              </ThumbRow>
              <ThumbRow>
                <ThumbNo>6</ThumbNo>
                <Thumb><Wave small />
                  <ThumbPaper>
                    <ThumbTitle>扩容</ThumbTitle>
                    <ThumbBody $top={4} $col={40} $left={4}>
                      <ThumbText>{'1. 触发条件：数组使用的\n    超过了75%\n2. 触发方法：数组变成2倍\n    大小\n3. 元素下标重新计算'}</ThumbText>
                      <ResizePic />
                    </ThumbBody>
                  </ThumbPaper><ThumbStripe /></Thumb>
              </ThumbRow>
              <ThumbRow>
                <ThumbNo>7</ThumbNo>
                <Thumb $on><Wave small />
                  <ThumbPaper>
                    <ThumbTitle>红黑树在<b>HASHMAP</b>中的应用{'\n'}（从<b>JDK1.8</b>起）</ThumbTitle>
                    <ThumbBody $top={4} $col={50} $left={4}>
                      <ThumbText $top={4}>{'•  红黑树：一种二叉树，高效\n    的检索效率\n•  出发条件：链表长度大于8'}</ThumbText>
                      <Diagram width={85} height={42} />
                    </ThumbBody>
                  </ThumbPaper><ThumbStripe /></Thumb>
              </ThumbRow>
            </Sidebar>
            <Editor>
              <Canvas>
                <Slide>
                  <Wave />
                  <SlideContent>
                    <SlideTitle>
                      红黑树在<Misspelt>HASHMAP</Misspelt>中的应用<br />（从<Heavy>JDK1.8</Heavy>起）
                    </SlideTitle>
                    <SlideBody>
                      <Bullets>
                        <li>红黑树：一种二叉树，高效的检索效率</li>
                        <li>出发条件：链表长度大于8</li>
                      </Bullets>
                      <Diagram width={501} height={243} cursor />
                    </SlideBody>
                  </SlideContent>
                  <SlideStripe />
                </Slide>
              </Canvas>
              <NotesPane>Click to add notes</NotesPane>
            </Editor>
          </Work>

          <Status>
            <StatusText>Slide 7 of 7</StatusText>
            <StatusText>Chinese (People's Republic of China)</StatusText>
            <Spacer />
            <StatusButtons>
              <StatusButton>
                <svg width="12" height="12" viewBox="0 0 12 12"><path d="M3 3.500L6 0l3 3.500z" fill="#58565a" /><path d="M0 5.500h12M0 8.500h12M0 11.500h8" stroke="#6b696d" /></svg>Notes
              </StatusButton>
              <StatusButton>
                <svg width="12" height="12" viewBox="0 0 12 12"><path d="M0 1h12v8H6l-3 3V9H0z" fill="#58565a" /></svg>Comments
              </StatusButton>
            </StatusButtons>
            <View $on aria-label="Normal view">
              <svg width="14" height="12" viewBox="0 0 14 12" fill="none" stroke="#f6f5f7" strokeWidth="1.300"><path d="M1 1h12v10H1zM4 1v10M6.500 4h4v3h-4zM6.500 9h5" /><path d="M1 1h3v10H1z" fill="#f6f5f7" /></svg>
            </View>
            <View aria-label="Slide sorter">
              <svg width="14" height="11" viewBox="0 0 14 11" fill="#58565a"><path d="M0 0h6v4.500H0zM8 0h6v4.500H8zM0 6.500h6V11H0zM8 6.500h6V11H8z" /></svg>
            </View>
            <View aria-label="Slide show">
              <svg width="14" height="12" viewBox="0 0 14 12" fill="none" stroke="#6b696d" strokeWidth="1.300"><path d="M0 1h14M1.500 1v6h11V1M4.500 4h5M7 7v4M4.500 11.300h5" /></svg>
            </View>
            <Bare aria-label="Zoom out">
              <svg width="29" height="10" viewBox="0 0 29 10"><path d="M21 5h8" stroke="#58565a" strokeWidth="1.800" /></svg>
            </Bare>
            <ZoomSlider type="range" defaultValue={50} aria-label="Zoom" />
            <Bare aria-label="Zoom in">
              <svg width="8" height="8" viewBox="0 0 8 8"><path d="M0 4h8M4 0v8" stroke="#58565a" strokeWidth="1.800" /></svg>
            </Bare>
            <Percent>107%</Percent>
            <Bare aria-label="Fit to window">
              <svg width="13" height="13" viewBox="0 0 13 13" fill="none" stroke="#7d7b7f" strokeWidth="1.300"><path d="M1 4V1h3M9 1h3v3M12 9v3H9M4 12H1V9M4 10V6.500h5V10z" /></svg>
            </Bare>
          </Status>
        </Window>
      </Stage>

      <PlayerArrow $side="left" aria-label="Previous">
        <svg width="10" height="18" viewBox="0 0 10 18" fill="none" stroke="#85868a" strokeWidth="2"><path d="M9 1L1 9l8 8" /></svg>
      </PlayerArrow>
      <PlayerArrow $side="right" aria-label="Next">
        <svg width="10" height="18" viewBox="0 0 10 18" fill="none" stroke="#a5a6a9" strokeWidth="2"><path d="M1 1l8 8-8 8" /></svg>
      </PlayerArrow>
      <Caption>
        Explain and Send Screenshots
        <CaptionLink href="#content">https://www.udemy.com/course/bestjavatutorial/learn/lecture/17389998#content</CaptionLink>
      </Caption>
      <Watermark>
        <svg width="16" height="15" viewBox="0 0 16 15" fill="none" stroke="#f2f1f4" strokeOpacity="0.8" strokeWidth="3"><path d="M2 3v6q0 4 4 4t4-4V6M2 3l5-2M11 9q3 2 5-1" /></svg>
        Udemy
      </Watermark>
    </Page>
  );
}
